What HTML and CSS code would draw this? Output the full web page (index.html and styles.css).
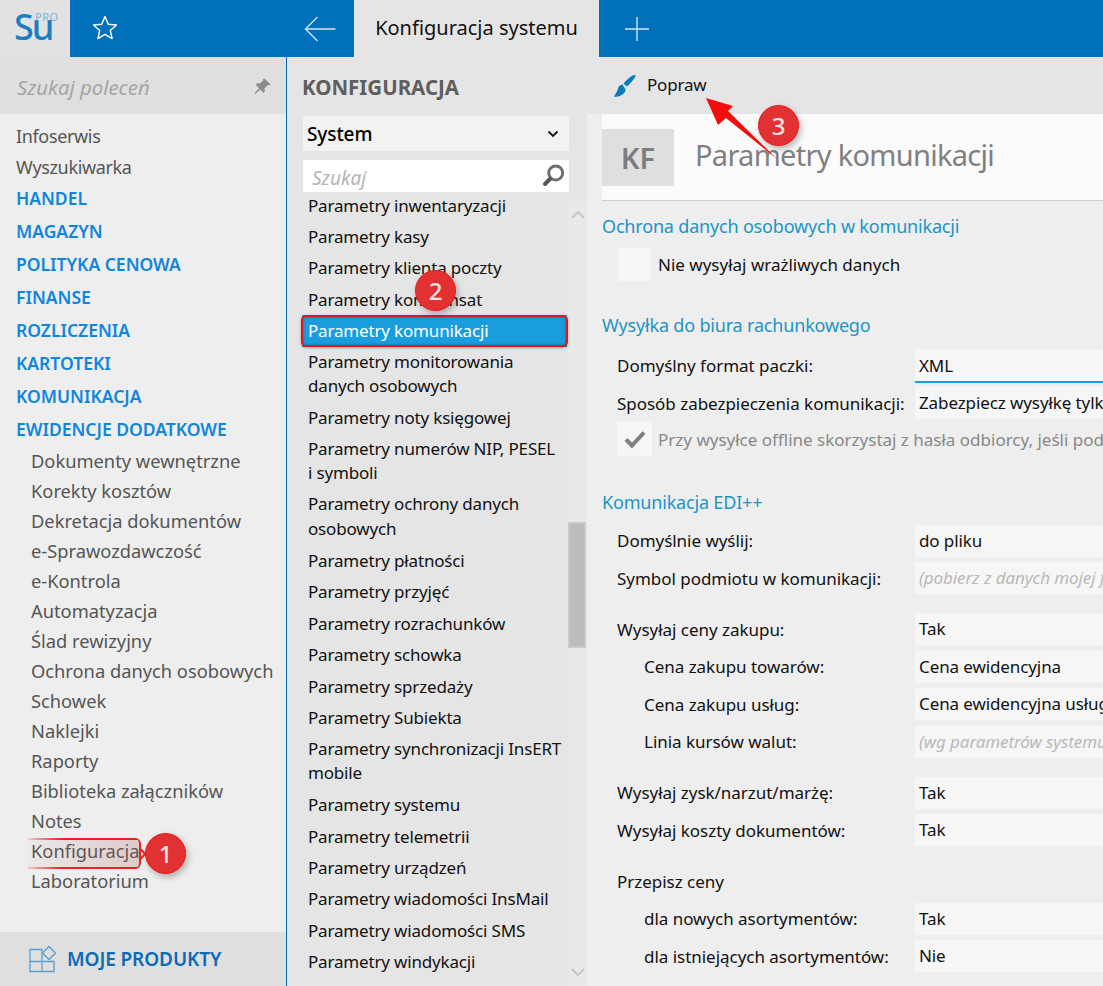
FILE: index.html
```html
<!DOCTYPE html>
<html lang="pl">
<head>
<meta charset="utf-8">
<title>Konfiguracja systemu</title>
<link rel="stylesheet" href="styles.css">
</head>
<body>
<div class="app">
  <header class="topbar">
    <div class="logo"><span class="logo-su">Su</span><span class="logo-pro">PRO</span></div>
    <div class="star-btn">
      <svg width="26" height="26" viewBox="0 0 26 26"><path d="M13 1.500l3.300 7.700 8.200.8-6.200 5.500 1.800 8.100L13 19.400l-7.100 4.200 1.800-8.100L1.500 10l8.200-.8z" fill="none" stroke="#fff" stroke-width="1.400" stroke-linejoin="round"/></svg>
    </div>
    <div class="back-btn">
      <svg width="32" height="26" viewBox="0 0 32 26"><path d="M31.500 13H1.500M13.500 1L1.500 13l12 12" fill="none" stroke="#cfe3f3" stroke-width="1.400"/></svg>
    </div>
    <div class="tab">Konfiguracja systemu</div>
    <div class="plus-btn">
      <svg width="26" height="26" viewBox="0 0 26 26"><path d="M13 1v24M1 13h24" fill="none" stroke="#cfe3f3" stroke-width="1.400"/></svg>
    </div>
  </header>
  <div class="body">
    <aside class="side">
      <div class="side-search">
        <span>Szukaj poleceń</span>
        <svg class="pin" width="20" height="20" viewBox="0 0 20 20"><path d="M12.500 1.500l6 6-1.600 1.100-1-.6-3.400 3.400.3 3-1.300 1.300-3.200-3.200-5 4.600-.8-.8 4.600-5-3.200-3.200L5 6.300l3 .3 3.400-3.400-.6-1z" fill="#8b8b8b"/></svg>
      </div>
      <nav class="side-menu">
        <a class="plain">Infoserwis</a>
        <a class="plain">Wyszukiwarka</a>
        <a class="group">HANDEL</a>
        <a class="group">MAGAZYN</a>
        <a class="group">POLITYKA CENOWA</a>
        <a class="group">FINANSE</a>
        <a class="group">ROZLICZENIA</a>
        <a class="group">KARTOTEKI</a>
        <a class="group">KOMUNIKACJA</a>
        <a class="group">EWIDENCJE DODATKOWE</a>
        <a class="sub">Dokumenty wewnętrzne</a>
        <a class="sub">Korekty kosztów</a>
        <a class="sub">Dekretacja dokumentów</a>
        <a class="sub">e-Sprawozdawczość</a>
        <a class="sub">e-Kontrola</a>
        <a class="sub">Automatyzacja</a>
        <a class="sub">Ślad rewizyjny</a>
        <a class="sub">Ochrona danych osobowych</a>
        <a class="sub">Schowek</a>
        <a class="sub">Naklejki</a>
        <a class="sub">Raporty</a>
        <a class="sub">Biblioteka załączników</a>
        <a class="sub">Notes</a>
        <a class="sub">Konfiguracja</a>
        <a class="sub">Laboratorium</a>
      </nav>
      <div class="side-foot">
        <svg width="28" height="28" viewBox="0 0 28 28"><path d="M1 4.500h12v12H1zM1 16.500h12v10H1zM13 16.500h12v10H13z" fill="none" stroke="#5b9fcd" stroke-width="1.300"/><path d="M20 1.500l6.500 6.500-6.500 6.500-6.500-6.500z" fill="#dfdfdf" stroke="#5b9fcd" stroke-width="1.300"/></svg>
        <span>MOJE PRODUKTY</span>
      </div>
    </aside>
    <section class="mid">
      <h2 class="mid-title">KONFIGURACJA</h2>
      <div class="select"><span>System</span><svg width="12" height="8" viewBox="0 0 12 8"><path d="M1.500 1.500L6 6l4.500-4.500" fill="none" stroke="#111" stroke-width="1.800"/></svg></div>
      <div class="search"><span>Szukaj</span>
        <svg width="26" height="26" viewBox="0 0 26 26"><circle cx="14.700" cy="10" r="7" fill="none" stroke="#6f6f6f" stroke-width="3"/><path d="M9 16l-5 5" stroke="#555" stroke-width="4" stroke-linecap="round"/></svg>
      </div>
      <div class="list-wrap">
        <ul class="list">
          <li>Parametry inwentaryzacji</li>
          <li>Parametry kasy</li>
          <li>Parametry klienta poczty</li>
          <li>Parametry kompensat</li>
          <li class="active">Parametry komunikacji</li>
          <li class="two">Parametry monitorowania<br>danych osobowych</li>
          <li>Parametry noty księgowej</li>
          <li class="two">Parametry numerów NIP, PESEL<br>i symboli</li>
          <li class="two">Parametry ochrony danych<br>osobowych</li>
          <li>Parametry płatności</li>
          <li>Parametry przyjęć</li>
          <li>Parametry rozrachunków</li>
          <li>Parametry schowka</li>
          <li>Parametry sprzedaży</li>
          <li>Parametry Subiekta</li>
          <li class="two">Parametry synchronizacji InsERT<br>mobile</li>
          <li>Parametry systemu</li>
          <li>Parametry telemetrii</li>
          <li>Parametry urządzeń</li>
          <li>Parametry wiadomości InsMail</li>
          <li>Parametry wiadomości SMS</li>
          <li>Parametry windykacji</li>
        </ul>
        <div class="scroll">
          <svg class="arrow-up" width="14" height="9" viewBox="0 0 14 9"><path d="M1 8l6-6 6 6" fill="none" stroke="#c4c4c4" stroke-width="1.800"/></svg>
          <div class="thumb"></div>
          <svg class="arrow-down" width="14" height="9" viewBox="0 0 14 9"><path d="M1 1l6 6 6-6" fill="none" stroke="#c4c4c4" stroke-width="1.800"/></svg>
        </div>
      </div>
    </section>
    <main class="main">
      <div class="toolbar">
        <svg width="24" height="24" viewBox="0 0 24 24"><path d="M23 1.500c-1-1-2.500-.5-3.500 0C16 3.500 13 6.500 10.500 9.500l3.500 3C17 10 21 5.500 23 1.500z" fill="#0b7fb5"/><path d="M9.500 10.500c-2.500.3-4 1.800-4.500 4-.4 1.800-1.500 4-4 8 3.800 1 8.500-1.200 10.500-4 .9-1.300 1.200-2.500.9-3.600z" fill="#0b7fb5"/></svg>
        <span>Popraw</span>
      </div>
      <div class="content">
        <div class="head">
          <div class="badge">KF</div>
          <h1>Parametry komunikacji</h1>
        </div>
        <h3 class="sec s1">Ochrona danych osobowych w komunikacji</h3>
        <div class="check-row r-a"><span class="box"></span><span class="check-label">Nie wysyłaj wrażliwych danych</span></div>
        <h3 class="sec s2">Wysyłka do biura rachunkowego</h3>
        <div class="row first"><label>Domyślny format paczki:</label><div class="field underline">XML</div></div>
        <div class="row"><label>Sposób zabezpieczenia komunikacji:</label><div class="field">Zabezpiecz wysyłkę tylko hasłem</div></div>
        <div class="check-row r-b"><span class="box">
          <svg width="24" height="20" viewBox="0 0 24 20"><path d="M3 10.500l6 6L21 3.500" fill="none" stroke="#808080" stroke-width="4"/></svg>
        </span><span class="check-label grey">Przy wysyłce offline skorzystaj z hasła odbiorcy, jeśli podano</span></div>
        <h3 class="sec s3">Komunikacja EDI++</h3>
        <div class="row first-b"><label>Domyślnie wyślij:</label><div class="field">do pliku</div></div>
        <div class="row"><label>Symbol podmiotu w komunikacji:</label><div class="field ph">(pobierz z danych mojej firmy)</div></div>
        <div class="row gap"><label>Wysyłaj ceny zakupu:</label><div class="field">Tak</div></div>
        <div class="row"><label class="in">Cena zakupu towarów:</label><div class="field">Cena ewidencyjna</div></div>
        <div class="row"><label class="in">Cena zakupu usług:</label><div class="field">Cena ewidencyjna usługi</div></div>
        <div class="row"><label class="in">Linia kursów walut:</label><div class="field ph">(wg parametrów systemu)</div></div>
        <div class="row gap"><label>Wysyłaj zysk/narzut/marżę:</label><div class="field">Tak</div></div>
        <div class="row"><label>Wysyłaj koszty dokumentów:</label><div class="field">Tak</div></div>
        <div class="row gap"><label class="low">Przepisz ceny</label></div>
        <div class="row"><label class="in">dla nowych asortymentów:</label><div class="field">Tak</div></div>
        <div class="row"><label class="in">dla istniejących asortymentów:</label><div class="field">Nie</div></div>
      </div>
    </main>
  </div>

  <div class="hl-konf"></div>
  <div class="hl-param"></div>
  <svg class="arrow3" width="74" height="64" viewBox="0 0 74 64"><path d="M0 0l27 8-5 5 49 48-51-41-8 7z" fill="#f30d0d"/></svg>
  <div class="pin-num n1">1</div>
  <div class="pin-num n2">2</div>
  <div class="pin-num n3">3</div>
</div>
</body>
</html>
```
FILE: styles.css
```css
* { box-sizing: border-box; margin: 0; padding: 0; }
html, body { width: 1103px; height: 986px; overflow: hidden; }
body { font-family: "Noto Sans", "Open Sans", sans-serif; font-size: 17px; color: #111; background: #eee; }
.app { position: relative; width: 1103px; height: 986px; overflow: hidden; display: flex; flex-direction: column; }

.topbar { height: 57px; background: #0070bb; display: flex; flex: none; }
.logo { position: relative; width: 70px; background: #e2e2e2; color: #1a7fc0; }
.logo-su { position: absolute; left: 14px; top: 9px; font-size: 36px; line-height: 36px; font-weight: 500; letter-spacing: -2px; }
.logo-pro { position: absolute; left: 35px; top: 11px; font-size: 11px; line-height: 12px; color: #7fb0d6; letter-spacing: .5px; }
.star-btn { width: 70px; display: flex; align-items: center; justify-content: center; padding-bottom: 2px; }
.back-btn { width: 214px; display: flex; align-items: center; justify-content: flex-end; padding-right: 18px; }
.tab { width: 245px; background: #e5e5e5; font-size: 20px; display: flex; align-items: center; justify-content: center; padding-bottom: 3px; color: #111; }
.plus-btn { width: 76px; display: flex; align-items: center; justify-content: center; }

.body { flex: 1; display: flex; min-height: 0; }

.side { width: 287px; flex: none; display: flex; flex-direction: column; border-right: 1px solid #0070bb; background: #eee; }
.side-search { height: 57px; flex: none; background: #dfdfdf; display: flex; align-items: center; justify-content: space-between; padding: 3px 14px 0 17px; color: #a5a5a5; font-style: italic; font-size: 20.300px; }
.side-menu { flex: 1; display: flex; flex-direction: column; padding-top: 7px; }
.side-menu a { display: block; padding-left: 16px; color: #555; }
.side-menu a.plain { height: 31px; line-height: 30px; font-size: 18px; letter-spacing: -.35px; }
.side-menu a.group { height: 33px; line-height: 30px; font-size: 17.500px; font-weight: 600; color: #0f86dc; }
.side-menu a.sub { height: 30px; line-height: 28px; padding-left: 31px; font-size: 18.300px; }
.side-foot { height: 54px; flex: none; background: #dfdfdf; display: flex; align-items: center; gap: 10px; padding: 0 0 0 29px; color: #0a6cb8; font-size: 19px; font-weight: 600; letter-spacing: -.1px; }

.mid { width: 300px; flex: none; background: #e5e5e5; display: flex; flex-direction: column; padding-top: 16px; }
.mid-title { font-size: 20.500px; font-weight: 700; color: #5e5e5e; padding-left: 15px; height: 43px; line-height: 28px; }
.select { margin-left: 16px; width: 266px; height: 35px; background: #f2f2f2; display: flex; align-items: center; justify-content: space-between; padding: 0 10px 0 4px; font-size: 19px; font-weight: 500; color: #000; letter-spacing: -.1px; flex: none; }
.search { margin: 9px 0 8px 16px; width: 266px; height: 32px; background: #fff; display: flex; align-items: center; justify-content: space-between; padding: 0 2px 0 9px; color: #b5b5b5; font-style: italic; font-size: 19px; flex: none; }
.search span { position: relative; top: 2px; }
.list-wrap { position: relative; flex: 1; min-height: 0; overflow: hidden; padding-left: 15px; }
.list { list-style: none; width: 265px; margin-top: -10.500px; }
.list li { height: 31.450px; line-height: 31px; padding-left: 6px; font-size: 17px; color: #111; letter-spacing: -.17px; white-space: nowrap; }
.list li.two { height: 55.600px; line-height: 24.500px; padding-top: 3px; }
.list li.active { background: #1a9ddf; color: #fff; }
.scroll { position: absolute; left: 281px; top: 0; bottom: 0; width: 19px; background: #e9e9e9; }
.arrow-up { position: absolute; left: 3px; top: 10px; }
.arrow-down { position: absolute; left: 3px; bottom: 9px; }
.thumb { position: absolute; left: 0; top: 322px; width: 18px; height: 126px; background: #bcbcbc; border: 2px solid #c9c9c9; }

.main { flex: 1; min-width: 0; display: flex; flex-direction: column; background: #eee; }
.toolbar { height: 57px; flex: none; background: #e5e5e5; display: flex; align-items: center; gap: 10px; padding: 0 0 0 26px; font-size: 17px; color: #111; }
.toolbar span { position: relative; top: -1px; letter-spacing: -.2px; }
.content { flex: 1; margin-left: 15px; min-height: 0; }
.head { height: 87px; background: #fbfbfb; border-bottom: 1px solid #cfcfcf; display: flex; align-items: center; }
.badge { width: 72px; height: 57px; background: #dfdfdf; color: #7d7d7d; font-size: 29px; font-weight: 600; display: flex; align-items: center; justify-content: center; }
.head h1 { font-size: 29px; font-weight: 400; color: #808080; margin-left: 21px; letter-spacing: -.7px; position: relative; top: -3px; }
.sec { font-size: 18px; font-weight: 400; color: #1b95c7; letter-spacing: -.18px; height: 24px; line-height: 24px; }
.sec.s1 { margin-top: 13px; }
.sec.s2 { margin-top: 32px; }
.sec.s3 { margin-top: 34px; }
.check-row { display: flex; align-items: center; }
.r-a { margin: 10px 0 0 16px; height: 33px; }
.r-b { margin-left: 15px; height: 34px; }
.box { width: 33px; height: 33px; background: #f6f6f6; display: flex; align-items: center; justify-content: center; flex: none; }
.r-b .box { width: 35px; height: 34px; }
.check-label { margin-left: 7px; font-size: 17px; color: #111; white-space: nowrap; }
.r-b .check-label { margin-left: 6px; }
.check-label.grey { color: #888; }
.row { display: flex; align-items: center; white-space: nowrap; height: 37.500px; }
.row.first { margin-top: 10px; }
.row.first-b { margin-top: 8px; }
.row.gap { margin-top: 13.500px; }
.row label { width: 313px; padding-left: 15px; font-size: 17px; letter-spacing: -.03px; flex: none; }
.row label.in { padding-left: 42px; }
.row label.low { padding-top: 1px; }
.field { flex: 1; height: 32px; background: #f6f6f6; padding-left: 4px; line-height: 31px; font-size: 17px; letter-spacing: -.1px; overflow: hidden; }
.field.underline { border-bottom: 2px solid #1a9ddf; height: 34px; line-height: 33px; }
.field.ph { color: #b9b9b9; font-style: italic; }

.hl-konf { position: absolute; left: 28px; top: 838px; width: 113px; height: 31px; border-right: 2px solid #f02020; border-radius: 0 6px 6px 0; background:
  linear-gradient(90deg, rgba(240,32,32,.15), #f02020 30%) top / 100% 2px no-repeat,
  linear-gradient(90deg, rgba(240,32,32,.15), #f02020 30%) bottom / 100% 2px no-repeat,
  linear-gradient(90deg, rgba(170,90,90,.03), rgba(170,90,90,.24)); }
.hl-konf::after { content: ""; position: absolute; right: -6px; top: 12px; width: 6px; height: 6px; border-top: 2px solid #f02020; border-right: 2px solid #f02020; transform: rotate(45deg); }
.hl-param { position: absolute; left: 301px; top: 315px; width: 267px; height: 32px; border: 2px solid #e4131c; border-radius: 5px; box-shadow: 0 1px 3px rgba(0,0,0,.3), inset 0 0 3px rgba(0,40,90,.45); }
.pin-num { position: absolute; width: 41px; height: 41px; border-radius: 50%; background: #e23133; border: 1.500px solid #f31616; color: #fbe3e3; font-size: 24px; font-weight: 500; display: flex; align-items: center; justify-content: center; box-shadow: 2px 3px 6px rgba(0,0,0,.28); }
.n1 { left: 145px; top: 833px; }
.n2 { left: 415px; top: 270px; }
.n3 { left: 758px; top: 105px; }
.arrow3 { position: absolute; left: 706px; top: 98px; }
```
